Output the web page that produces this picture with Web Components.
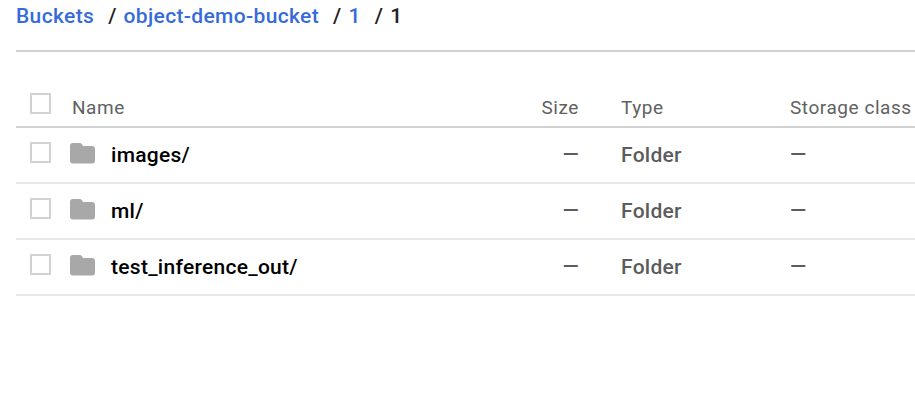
<!DOCTYPE html>
<html lang="en"><head><meta charset="utf-8"><title>Bucket browser</title>
<style>
html,body{margin:0;background:#fff;overflow:hidden}
body{font-family:Roboto,"Liberation Sans",sans-serif;height:409px}
</style></head><body>
<bucket-page></bucket-page>
<script>
const define=(name,html)=>customElements.define(name,class extends HTMLElement{
  constructor(){super();this.attachShadow({mode:'open'}).innerHTML=html}
});
define('check-box',`<style>:host{display:block;box-sizing:border-box;width:21px;height:21px;border:2px solid #d2d2d2;background:#fff}</style>`);
define('folder-icon',`<style>:host{display:block;width:25px;height:21px}svg{display:block}</style>
<svg width="25" height="21" viewBox="0 0 25 21"><path fill="#a8a8a8" d="M3 0H9.6Q11 0 12 1.2L12.8 3H22Q25 3 25 6V17.4Q25 20.4 22 20.4H3Q0 20.4 0 17.4V3Q0 0 3 0Z"/></svg>`);
define('path-bar',`<style>:host{display:flex;box-sizing:border-box;height:52px;border-bottom:2px solid #d2d2d2;font-size:21px;font-weight:500;line-height:32px;letter-spacing:.35px;white-space:pre;color:#212121}</style><slot></slot>`);
define('path-link',`<style>:host{display:block;color:#366bd9;margin-right:14px}</style><slot></slot>`);
define('path-sep',`<style>:host{display:block;width:15.4px}</style>/`);
customElements.define('object-row',class extends HTMLElement{
  connectedCallback(){
    const head=this.hasAttribute('head');
    this.attachShadow({mode:'open'}).innerHTML=`<style>
:host{display:grid;grid-template-columns:54px 1fr 100px 169px 125px;box-sizing:border-box;height:56px;border-bottom:2px solid #e8e8e8;color:#5c5c5c;font-size:21px;font-weight:500;line-height:24px;letter-spacing:.28px;padding-top:15px;white-space:nowrap}
:host([head]){height:76px;border-color:#d2d2d2;color:#616161;font-size:19px;font-weight:400;letter-spacing:.55px;padding-top:43px}
check-box{margin:-1px 0 0 14px}:host([head]) check-box{margin-top:-2px}
.name{display:flex;color:#000}:host([head]) .name{color:inherit;padding-left:2px}
folder-icon{margin-right:16px}
.size{text-align:right;padding-right:42px}
:host(:not([head])) .size,:host(:not([head])) .class{margin-top:-1px}
:host([head]) div{padding-top:1px}
</style><check-box></check-box><div class="name">${head?'':'<folder-icon></folder-icon>'}<slot></slot></div><div class="size">${head?'Size':'—'}</div><div class="type">${head?'Type':'Folder'}</div><div class="class">${head?'Storage class':'—'}</div>`;
  }
});
define('bucket-page',`<style>:host{display:block;padding-left:16px}</style>
<path-bar><path-link>Buckets</path-link><path-sep></path-sep><path-link>object-demo-bucket</path-link><path-sep></path-sep><path-link>1</path-link><path-sep></path-sep><span>1</span></path-bar>
<object-row head>Name</object-row><object-row>images/</object-row><object-row>ml/</object-row><object-row>test_inference_out/</object-row>`);
</script></body></html>
